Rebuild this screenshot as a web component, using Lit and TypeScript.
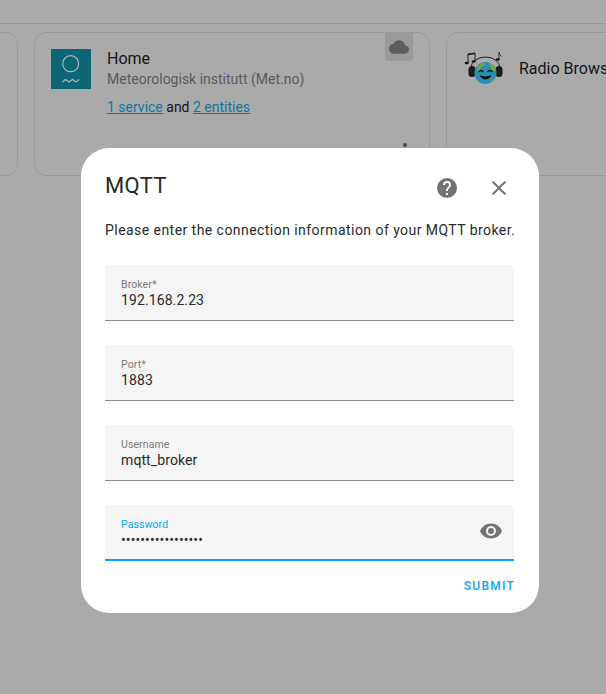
import {LitElement, html, css} from 'lit';
import {customElement} from 'lit/decorators.js';

const FIELDS = [
  {label: 'Broker*', value: '192.168.2.23'},
  {label: 'Port*', value: '1883'},
  {label: 'Username', value: 'mqtt_broker'},
];

@customElement('app-root')
export class AppRoot extends LitElement {
  static styles = css`
    :host {
      display: block;
      position: relative;
      width: 606px;
      height: 694px;
      overflow: hidden;
      background: #aaaaaa;
      font-family: Roboto, 'Liberation Sans', sans-serif;
    }

    .topbar {
      height: 23px;
      border-bottom: 1px solid #989898;
    }

    .cards {
      display: flex;
      gap: 16px;
      margin: 8px 0 0 -378px;
    }

    .card {
      position: relative;
      flex: none;
      box-sizing: border-box;
      width: 396px;
      height: 144px;
      padding: 16px;
      display: flex;
      gap: 16px;
      border: 1px solid #999999;
      border-radius: 12px;
    }

    .logo {
      flex: none;
      width: 40px;
      height: 40px;
    }

    .home-title {
      font-size: 16px;
      line-height: 20px;
      color: #151515;
    }

    .home-sub {
      font-size: 14px;
      line-height: 20px;
      color: #5a5a5a;
    }

    .links {
      font-size: 14px;
      line-height: 20px;
      color: #151515;
      margin-top: 8px;
    }

    .links a {
      color: #0f779f;
      text-decoration: underline;
    }

    .cloud-badge {
      position: absolute;
      top: -1px;
      right: 16px;
      width: 28px;
      height: 28px;
      padding-top: 1px;
      display: flex;
      align-items: center;
      justify-content: center;
      background: #9a9a9a;
      border-radius: 0 0 4px 4px;
    }

    .menu-dot {
      position: absolute;
      top: 110px;
      right: 22px;
      width: 4px;
      height: 4px;
      border-radius: 50%;
      background: #4a4a4a;
    }

    .radio-title {
      font-size: 16px;
      line-height: 20px;
      color: #151515;
      white-space: nowrap;
      margin-top: 10px;
    }

    .dialog {
      position: absolute;
      left: 81px;
      top: 148px;
      box-sizing: border-box;
      width: 458px;
      height: 465px;
      padding: 20px 25px 0 24px;
      background: #ffffff;
      border-radius: 28px;
    }

    .head {
      display: flex;
      align-items: center;
      height: 36px;
    }

    .title {
      flex: 1;
      font-size: 22px;
      line-height: 36px;
      color: #2a2a2a;
      letter-spacing: 0.4px;
    }

    .head-icons {
      display: flex;
      align-items: center;
      gap: 28px;
      margin: 4px 3px 0 0;
    }

    .head-icons svg {
      display: block;
      fill: #727272;
    }

    .desc {
      margin: 16px 0 0;
      font-size: 14px;
      line-height: 20px;
      letter-spacing: 0.45px;
      color: #2a2a2a;
      white-space: nowrap;
    }

    .fields {
      display: flex;
      flex-direction: column;
      gap: 24px;
      margin-top: 25px;
    }

    .field {
      position: relative;
      box-sizing: border-box;
      height: 56px;
      padding: 13px 16px 0;
      background: #f5f5f5;
      border-radius: 4px 4px 0 0;
      border-bottom: 1px solid #8c8c8c;
    }

    .field label {
      display: block;
      font-size: 10.5px;
      line-height: 13px;
      letter-spacing: 0.1px;
      color: #7a7a7a;
    }

    .field .value {
      font-size: 14px;
      line-height: 20px;
      letter-spacing: 0.1px;
      color: #2a2a2a;
      margin-top: -1px;
    }

    .field.focused {
      border-bottom: 2px solid #03a9f4;
    }

    .field.focused label {
      color: #03a9f4;
    }

    .eye {
      position: absolute;
      right: 11px;
      top: 14px;
      fill: #727272;
      display: block;
    }

    .actions {
      display: flex;
      justify-content: flex-end;
      margin-top: 16px;
    }

    .submit {
      font-size: 12px;
      line-height: 18px;
      font-weight: 500;
      letter-spacing: 1.25px;
      color: #03a9f4;
      margin-right: -1px;
    }
  `;

  renderMetLogo() {
    return html`<svg class="logo" viewBox="0 0 40 40">
      <rect width="40" height="40" fill="#0f6578"></rect>
      <circle cx="19.700" cy="14.700" r="8" fill="none" stroke="#a9b9bd" stroke-width="1.2"></circle>
      <path d="M11.500 33 l3-2.500 l3.500 2.500 l3.500-2.500 l3.500 2.500 l3-2.500" fill="none" stroke="#a9b9bd" stroke-width="1.2"></path>
    </svg>`;
  }

  renderRadioLogo() {
    return html`<svg class="logo" viewBox="0 0 40 40">
      <path d="M8 19 A14.500 11 0 0 1 37 19" fill="none" stroke="#222" stroke-width="1"></path>
      <rect x="5.500" y="17" width="7" height="11" rx="3.500" fill="#1c1c1c"></rect>
      <rect x="32.500" y="17" width="7" height="11" rx="3.500" fill="#1c1c1c"></rect>
      <circle cx="22.500" cy="24" r="11" fill="#2a8fb8"></circle>
      <path d="M14 18 q5-5 8-4 q-1 4-4 4 q0 3-4 5 z M26 14 q6 1 7 7 q-3 3-5-1 z M28 31 q3-1 4-3 q-1 4-4 5 z" fill="#6aa84f"></path>
      <path d="M15.500 23 q2.500-3 5 0 M24.500 23 q2.500-3 5 0" fill="none" stroke="#111" stroke-width="1.3"></path>
      <path d="M17 27 q5.500 6 11 0 q-5.500 2-11 0 z" fill="#111" stroke="#111" stroke-width="1"></path>
      <path d="M5 14 v-9 l7-1 v8" fill="none" stroke="#222" stroke-width="1"></path>
      <path d="M5 5.500 l7-1" fill="none" stroke="#222" stroke-width="1.5"></path>
      <ellipse cx="3.700" cy="14" rx="2" ry="1.200" fill="#111"></ellipse>
      <ellipse cx="10.700" cy="12.500" rx="2" ry="1.200" fill="#111"></ellipse>
      <path d="M36 10 v-7 q0 2.500 2.500 4.500" fill="none" stroke="#333" stroke-width="1"></path>
      <ellipse cx="34.700" cy="10.500" rx="2" ry="1.200" fill="#111"></ellipse>
    </svg>`;
  }

  render() {
    return html`
      <div class="topbar"></div>
      <div class="cards">
        <div class="card"></div>
        <div class="card">
          ${this.renderMetLogo()}
          <div>
            <div class="home-title">Home</div>
            <div class="home-sub">Meteorologisk institutt (Met.no)</div>
            <div class="links"><a>1 service</a> and <a>2 entities</a></div>
          </div>
          <div class="cloud-badge">
            <svg width="20" height="20" viewBox="0 0 24 24" fill="#5e5e5e">
              <path d="M19.35 10.04C18.67 6.59 15.64 4 12 4 9.11 4 6.6 5.64 5.35 8.04 2.34 8.36 0 10.91 0 14c0 3.31 2.69 6 6 6h13c2.760 0 5-2.240 5-5 0-2.640-2.050-4.780-4.650-4.960z"></path>
            </svg>
          </div>
          <div class="menu-dot"></div>
        </div>
        <div class="card">
          ${this.renderRadioLogo()}
          <div class="radio-title">Radio Browser</div>
        </div>
      </div>

      <div class="dialog">
        <div class="head">
          <div class="title">MQTT</div>
          <div class="head-icons">
            <svg width="24" height="24" viewBox="0 0 24 24">
              <path d="M15.07,11.25L14.17,12.17C13.45,12.89 13,13.500 13,15H11V14.500C11,13.390 11.450,12.390 12.170,11.670L13.410,10.410C13.780,10.050 14,9.550 14,9C14,7.890 13.100,7 12,7A2,2 0 0,0 10,9H8A4,4 0 0,1 12,5A4,4 0 0,1 16,9C16,9.880 15.640,10.670 15.070,11.250M13,19H11V17H13M12,2A10,10 0 0,0 2,12A10,10 0 0,0 12,22A10,10 0 0,0 22,12C22,6.470 17.500,2 12,2Z"></path>
            </svg>
            <svg width="24" height="24" viewBox="0 0 24 24">
              <path d="M19,6.410L17.590,5L12,10.590L6.410,5L5,6.410L10.590,12L5,17.590L6.410,19L12,13.410L17.590,19L19,17.590L13.410,12L19,6.410Z"></path>
            </svg>
          </div>
        </div>
        <p class="desc">Please enter the connection information of your MQTT broker.</p>
        <div class="fields">
          ${FIELDS.map(
            (f) => html`
              <div class="field">
                <label>${f.label}</label>
                <div class="value">${f.value}</div>
              </div>
            `
          )}
          <div class="field focused">
            <label>Password</label>
            <div class="value">•••••••••••••••••</div>
            <svg class="eye" width="24" height="24" viewBox="0 0 24 24">
              <path d="M12,9A3,3 0 0,0 9,12A3,3 0 0,0 12,15A3,3 0 0,0 15,12A3,3 0 0,0 12,9M12,17A5,5 0 0,1 7,12A5,5 0 0,1 12,7A5,5 0 0,1 17,12A5,5 0 0,1 12,17M12,4.500C7,4.500 2.730,7.610 1,12C2.730,16.390 7,19.500 12,19.500C17,19.500 21.270,16.390 23,12C21.270,7.610 17,4.500 12,4.500Z"></path>
            </svg>
          </div>
        </div>
        <div class="actions">
          <div class="submit">SUBMIT</div>
        </div>
      </div>
    `;
  }
}
